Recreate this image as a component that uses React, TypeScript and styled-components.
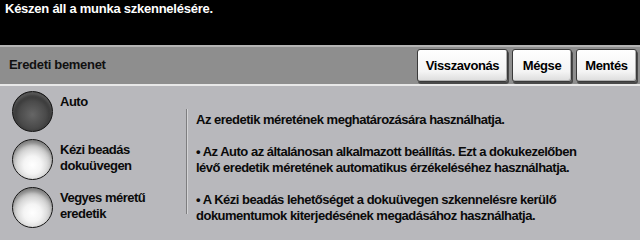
import React, { useState } from 'react'
import styled, { createGlobalStyle } from 'styled-components'

const GlobalStyle = createGlobalStyle`
    body {
        margin: 0;
        background: #b8b8bc;
        font-family: 'Liberation Sans', Arial, sans-serif;
    }
`

const options = [
    { id: 'auto', label: ['Auto'] },
    { id: 'manual', label: ['Kézi beadás', 'dokuüvegen'] },
    { id: 'mixed', label: ['Vegyes méretű', 'eredetik'] },
]

const paragraphs = [
    ['Az eredetik méretének meghatározására használhatja.'],
    ['• Az Auto az általánosan alkalmazott beállítás. Ezt a dokukezelőben', 'lévő eredetik méretének automatikus érzékeléséhez használhatja.'],
    ['• A Kézi beadás lehetőséget a dokuüvegen szkennelésre kerülő', 'dokumentumok kiterjedésének megadásához használhatja.'],
]

export default function App() {
    const [selected, setSelected] = useState('auto')

    return (
        <Screen>
            <GlobalStyle />
            <StatusBar>Készen áll a munka szkennelésére.</StatusBar>
            <Header>
                <Title>Eredeti bemenet</Title>
                <Actions>
                    <ActionButton $w={91}>Visszavonás</ActionButton>
                    <ActionButton $w={60}>Mégse</ActionButton>
                    <ActionButton $w={61}>Mentés</ActionButton>
                </Actions>
            </Header>
            <Body>
                <Options>
                    {options.map(o => (
                        <Option key={o.id} onClick={() => setSelected(o.id)}>
                            <Radio $active={selected === o.id} />
                            <OptionLabel>
                                {o.label.map(l => <div key={l}>{l}</div>)}
                            </OptionLabel>
                        </Option>
                    ))}
                </Options>
                <Divider />
                <Description>
                    {paragraphs.map((p, i) => (
                        <p key={i}>
                            {p.map(line => <span key={line}>{line}</span>)}
                        </p>
                    ))}
                </Description>
            </Body>
        </Screen>
    )
}

const Screen = styled.div`
    width: 640px;
    height: 240px;
    display: flex;
    flex-direction: column;
    overflow: hidden;
    font-size: 13px;
    font-weight: 700;
    letter-spacing: -0.5px;
    line-height: 16px;
    color: #0a0a0a;
`

const StatusBar = styled.div`
    height: 47px;
    background: #000;
    color: #fff;
    padding: 1px 5px 0;
    box-sizing: border-box;
    letter-spacing: -0.25px;
`

const Header = styled.div`
    height: 39px;
    background: #8e8e8e;
    border-top: 2px solid #b4b4b4;
    border-bottom: 2px solid #e8e8e8;
    display: flex;
    align-items: center;
    justify-content: space-between;
    padding: 0 3px 0 9px;
`

const Title = styled.div`
    color: #111;
    letter-spacing: -0.3px;
`

const Actions = styled.div`
    display: flex;
    gap: 4px;
    padding-top: 1px;
`

const ActionButton = styled.button<{ $w: number }>`
    width: ${p => p.$w}px;
    height: 33px;
    padding: 0;
    font: inherit;
    letter-spacing: -0.4px;
    color: #000;
    background: linear-gradient(#ffffff, #f4f4f4 70%, #dcdcdc);
    border: 1px solid #3a3a3a;
    border-radius: 3px;
    box-shadow: 1px 2px 0 #4a4a4a, inset -1px -1px 0 #b0b0b0;
    cursor: pointer;
`

const Body = styled.div`
    flex: 1;
    display: flex;
    align-items: flex-start;
`

const Options = styled.div`
    width: 186px;
    padding: 5px 0 0 12px;
    box-sizing: border-box;
    display: flex;
    flex-direction: column;
    gap: 7px;
`

const Option = styled.div`
    display: flex;
    gap: 7px;
    cursor: pointer;
`

const Radio = styled.div<{ $active: boolean }>`
    width: 41px;
    height: 41px;
    flex: none;
    border-radius: 50%;
    box-sizing: border-box;
    border: 1.5px solid #141414;
    background: ${p => p.$active
        ? 'radial-gradient(circle at 50% 58%, #666 0%, #4a4a4a 45%, #282828 78%, #0e0e0e 100%)'
        : 'radial-gradient(circle at 50% 64%, #ffffff 0%, #f4f4f4 28%, #c8c8c8 62%, #7a7a7a 88%, #4a4a4a 100%)'};
    box-shadow: ${p => p.$active
        ? 'inset 0 3px 3px rgba(190,190,190,0.3)'
        : 'inset 0 4px 4px rgba(90,90,90,0.45)'};
`

const OptionLabel = styled.div`
    padding-top: 3px;
    white-space: nowrap;
`

const Divider = styled.div`
    width: 1px;
    height: 105px;
    margin-top: 23px;
    background: #7e7e80;
    border-right: 1px solid #d4d4d6;
    flex: none;
`

const Description = styled.div`
    margin: 26px 0 0 8px;
    white-space: nowrap;

    p {
        margin: 0 0 16px;
    }

    span {
        display: block;
    }
`
